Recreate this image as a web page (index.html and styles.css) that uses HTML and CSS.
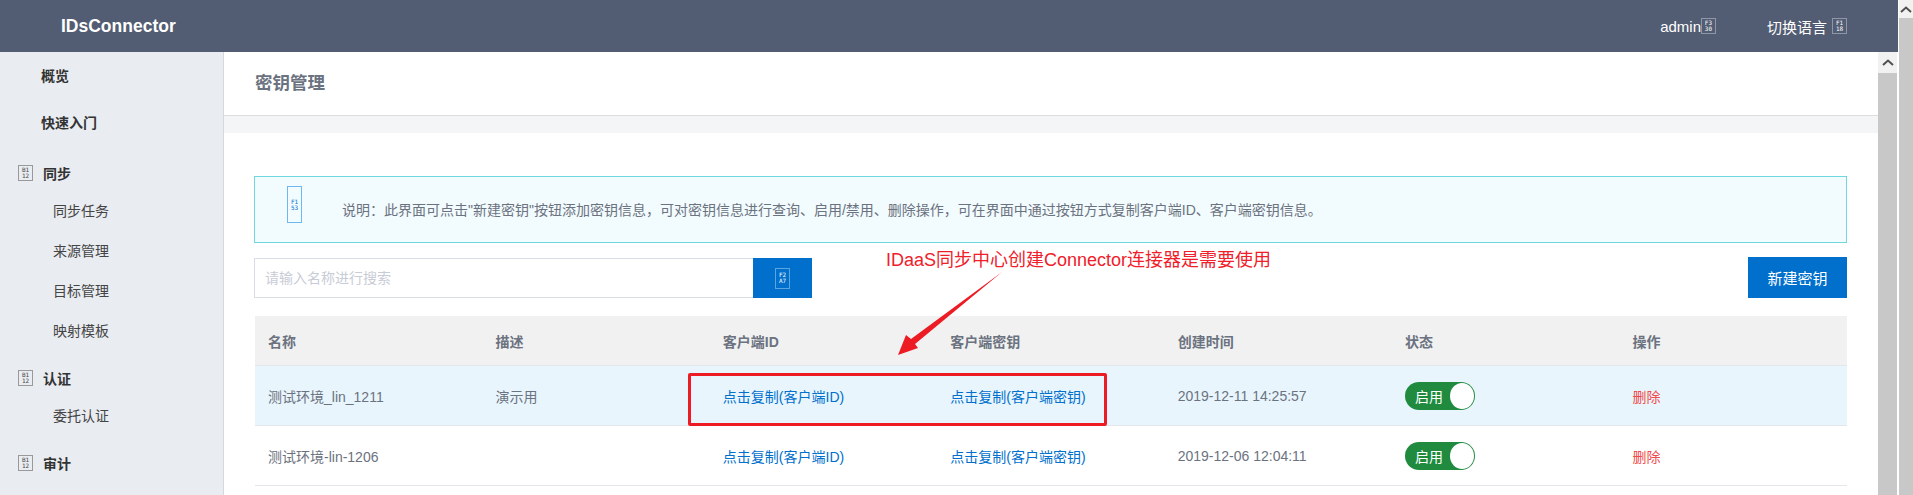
FILE: index.html
```html
<!DOCTYPE html>
<html>
<head>
	<meta charset="UTF-8">
	<title>IDsConnector</title>
	<link rel="stylesheet" href="styles.css">
</head>
<body>
	<div class="page">
		<div class="topbar">
			<span class="logo">IDsConnector</span>
			<div class="topbar-right">
				<span class="user">admin<i class="glyph glyph-top">F3<br>30</i></span>
				<span class="lang">切换语言<i class="glyph glyph-top">F1<br>18</i></span>
			</div>
		</div>
		<div class="layout">
			<div class="side">
				<a class="side-top" href="#">概览</a>
				<a class="side-top" href="#">快速入门</a>
				<div class="side-group">
					<span class="side-title"><i class="glyph glyph-side">B1<br>12</i>同步</span>
					<a href="#">同步任务</a>
					<a href="#">来源管理</a>
					<a href="#">目标管理</a>
					<a href="#">映射模板</a>
				</div>
				<div class="side-group">
					<span class="side-title"><i class="glyph glyph-side">B1<br>12</i>认证</span>
					<a href="#">委托认证</a>
				</div>
				<div class="side-group">
					<span class="side-title"><i class="glyph glyph-side">B1<br>12</i>审计</span>
				</div>
			</div>
			<div class="main">
				<div class="title-bar">密钥管理</div>
				<div class="band"></div>
				<div class="content">
					<div class="notice">
						<i class="glyph glyph-notice">F1<br>53</i>
						<span>说明：此界面可点击"新建密钥"按钮添加密钥信息，可对密钥信息进行查询、启用/禁用、删除操作，可在界面中通过按钮方式复制客户端ID、客户端密钥信息。</span>
					</div>
					<div class="toolbar">
						<div class="search">
							<input type="text" placeholder="请输入名称进行搜索">
							<button type="button"><i class="glyph glyph-search">F2<br>A7</i></button>
						</div>
						<button type="button" class="btn-new">新建密钥</button>
					</div>
					<table class="keys">
						<thead>
							<tr>
								<th>名称</th>
								<th>描述</th>
								<th>客户端ID</th>
								<th>客户端密钥</th>
								<th>创建时间</th>
								<th>状态</th>
								<th>操作</th>
							</tr>
						</thead>
						<tbody>
							<tr class="active">
								<td>测试环境_lin_1211</td>
								<td>演示用</td>
								<td><a href="#">点击复制(客户端ID)</a></td>
								<td><a href="#">点击复制(客户端密钥)</a></td>
								<td>2019-12-11 14:25:57</td>
								<td><span class="toggle">启用<b></b></span></td>
								<td><a class="del" href="#">删除</a></td>
							</tr>
							<tr>
								<td>测试环境-lin-1206</td>
								<td></td>
								<td><a href="#">点击复制(客户端ID)</a></td>
								<td><a href="#">点击复制(客户端密钥)</a></td>
								<td>2019-12-06 12:04:11</td>
								<td><span class="toggle">启用<b></b></span></td>
								<td><a class="del" href="#">删除</a></td>
							</tr>
						</tbody>
					</table>
				</div>
			</div>
			<div class="scroll scroll-inner"><span class="scroll-btn"><svg width="12" height="7" viewBox="0 0 12 7"><path d="M1 6L6 1.5L11 6" fill="none" stroke="#505050" stroke-width="2"/></svg></span></div>
		</div>
	</div>
	<div class="scroll scroll-outer"><span class="scroll-btn"><svg width="12" height="7" viewBox="0 0 12 7"><path d="M1 6L6 1.5L11 6" fill="none" stroke="#505050" stroke-width="2"/></svg></span></div>

	<!-- 截图上的红色标注 -->
	<span class="mark-text">IDaaS同步中心创建Connector连接器是需要使用</span>
	<div class="mark-box"></div>
	<svg class="mark-arrow" width="1913" height="495" viewBox="0 0 1913 495">
		<polygon points="1002,272 911,339 906,335 898,355 918,348 915,344" fill="#ed1c24"/>
	</svg>
</body>
</html>
```

FILE: styles.css
```css
*{
	margin: 0;
	padding: 0;
	box-sizing: border-box;
}
html,body{
	height: 495px;
	overflow: hidden;
}
body{
	display: flex;
	background: #fff;
	font: 14px 'Liberation Sans','Noto Sans CJK SC',sans-serif;
	color: #6b7280;
}
a{
	text-decoration: none;
}
.page{
	flex: 1;
	min-width: 0;
	margin-right: 1px;
	display: flex;
	flex-direction: column;
}

/* 顶部 */
.topbar{
	flex: none;
	height: 52px;
	padding: 0 51px 0 61px;
	display: flex;
	justify-content: space-between;
	align-items: center;
	background: #525c72;
	color: #fff;
}
.logo{
	font-size: 17.5px;
	font-weight: bold;
}
.topbar-right{
	display: flex;
	font-size: 15px;
}
.user,.lang{
	display: flex;
	align-items: center;
}
.user{
	margin-right: 51px;
}
.lang .glyph{
	margin-left: 5px;
}

/* 缺字方框图标 */
.glyph{
	flex: none;
	display: inline-flex;
	align-items: center;
	justify-content: center;
	border: 1px solid #999;
	font: normal 6px/6px 'DejaVu Sans Mono',monospace;
	text-align: center;
}
.glyph-top{
	width: 15px;
	height: 16px;
	border-color: #8f96a8;
	color: #fff;
}
.glyph-side{
	width: 15px;
	height: 16px;
	margin-right: 10px;
	color: #444;
}
.glyph-notice{
	width: 15px;
	height: 37px;
	border-color: #6db8f0;
	color: #0070cc;
}
.glyph-search{
	width: 15px;
	height: 21px;
	border-color: #5aa5e0;
	color: #fff;
}

.layout{
	flex: 1;
	min-height: 0;
	display: flex;
}

/* 侧边栏 */
.side{
	flex: none;
	width: 224px;
	padding-top: 4px;
	background: #e9ecf1;
	border-right: 1px solid #d5d9df;
	color: #333;
}
.side a{
	display: block;
	height: 40px;
	line-height: 40px;
	padding-left: 53px;
	color: #444;
}
.side a.side-top{
	padding-left: 41px;
	margin-bottom: 7px;
	font-weight: bold;
	color: #333;
}
.side-group{
	margin-top: 9px;
}
.side-group:first-of-type{
	margin-top: 12px;
}
.side-title{
	display: flex;
	align-items: center;
	height: 36px;
	padding-left: 18px;
	font-weight: bold;
}

/* 内容区 */
.main{
	flex: 1;
	min-width: 0;
}
.title-bar{
	height: 64px;
	padding-left: 31px;
	line-height: 62px;
	font-size: 17.5px;
	font-weight: bold;
	background: #fff;
	border-bottom: 1px solid #ddd;
}
.band{
	height: 17px;
	background: #f3f5f7;
}
.content{
	padding: 43px 31px 0 30px;
}
.notice{
	height: 67px;
	display: flex;
	align-items: flex-start;
	padding: 9px 0 0 32px;
	background: #f2fbfe;
	border: 1px solid #6fd8de;
}
.notice span{
	margin: 15px 0 0 40px;
	line-height: 18px;
}
.toolbar{
	margin-top: 14px;
	display: flex;
	justify-content: space-between;
}
.search{
	display: flex;
	margin-top: 1px;
}
.search input{
	width: 499px;
	height: 40px;
	padding-left: 10px;
	border: 1px solid #d8dde6;
	border-right: 0;
	outline: none;
	font: 14px 'Liberation Sans','Noto Sans CJK SC',sans-serif;
}
.search input::placeholder{
	color: #c8ccd6;
}
.search button{
	width: 59px;
	height: 40px;
	border: 0;
	background: #0070cc;
	display: flex;
	align-items: center;
	justify-content: center;
}
.btn-new{
	width: 99px;
	height: 41px;
	border: 0;
	background: #0070cc;
	color: #fff;
	font: 15px 'Liberation Sans','Noto Sans CJK SC',sans-serif;
}

/* 表格 */
.keys{
	width: 1592px;
	margin: 18px 0 0 1px;
	table-layout: fixed;
	border-collapse: separate;
	border-spacing: 0;
}
.keys th{
	height: 50px;
	padding-left: 13px;
	text-align: left;
	background: #f1f1f1;
	border-bottom: 1px solid #e4e6ea;
}
.keys td{
	height: 60px;
	padding-left: 13px;
	border-bottom: 1px solid #e4e6ea;
}
.keys tr.active td{
	background: #e8f5fd;
}
.keys td a{
	color: #0070cc;
}
.keys td a.del{
	color: #f04b4b;
}
.toggle{
	display: flex;
	align-items: center;
	justify-content: space-between;
	width: 70px;
	height: 28px;
	padding: 0 1px 0 10px;
	border-radius: 14px;
	background: #208b3f;
	color: #fff;
}
.toggle b{
	width: 24px;
	height: 26px;
	border-radius: 50%;
	background: #fff;
}

/* 滚动条 */
.scroll{
	flex: none;
	background: #c8c8c8;
}
.scroll-inner{
	width: 19px;
	margin-right: 1px;
}
.scroll-outer{
	width: 14px;
}
.scroll-btn{
	display: flex;
	align-items: center;
	justify-content: center;
	background: #f1f1f1;
}
.scroll-inner .scroll-btn{
	height: 21px;
}
.scroll-outer .scroll-btn{
	height: 18px;
}

/* 标注 */
.mark-text{
	position: absolute;
	left: 886px;
	top: 249px;
	font-size: 18px;
	line-height: 22px;
	color: #f0202a;
	white-space: nowrap;
}
.mark-box{
	position: absolute;
	left: 688px;
	top: 373px;
	width: 419px;
	height: 53px;
	border: 3px solid #ed1c24;
	border-radius: 2px;
}
.mark-arrow{
	position: absolute;
	left: 0;
	top: 0;
}
```
